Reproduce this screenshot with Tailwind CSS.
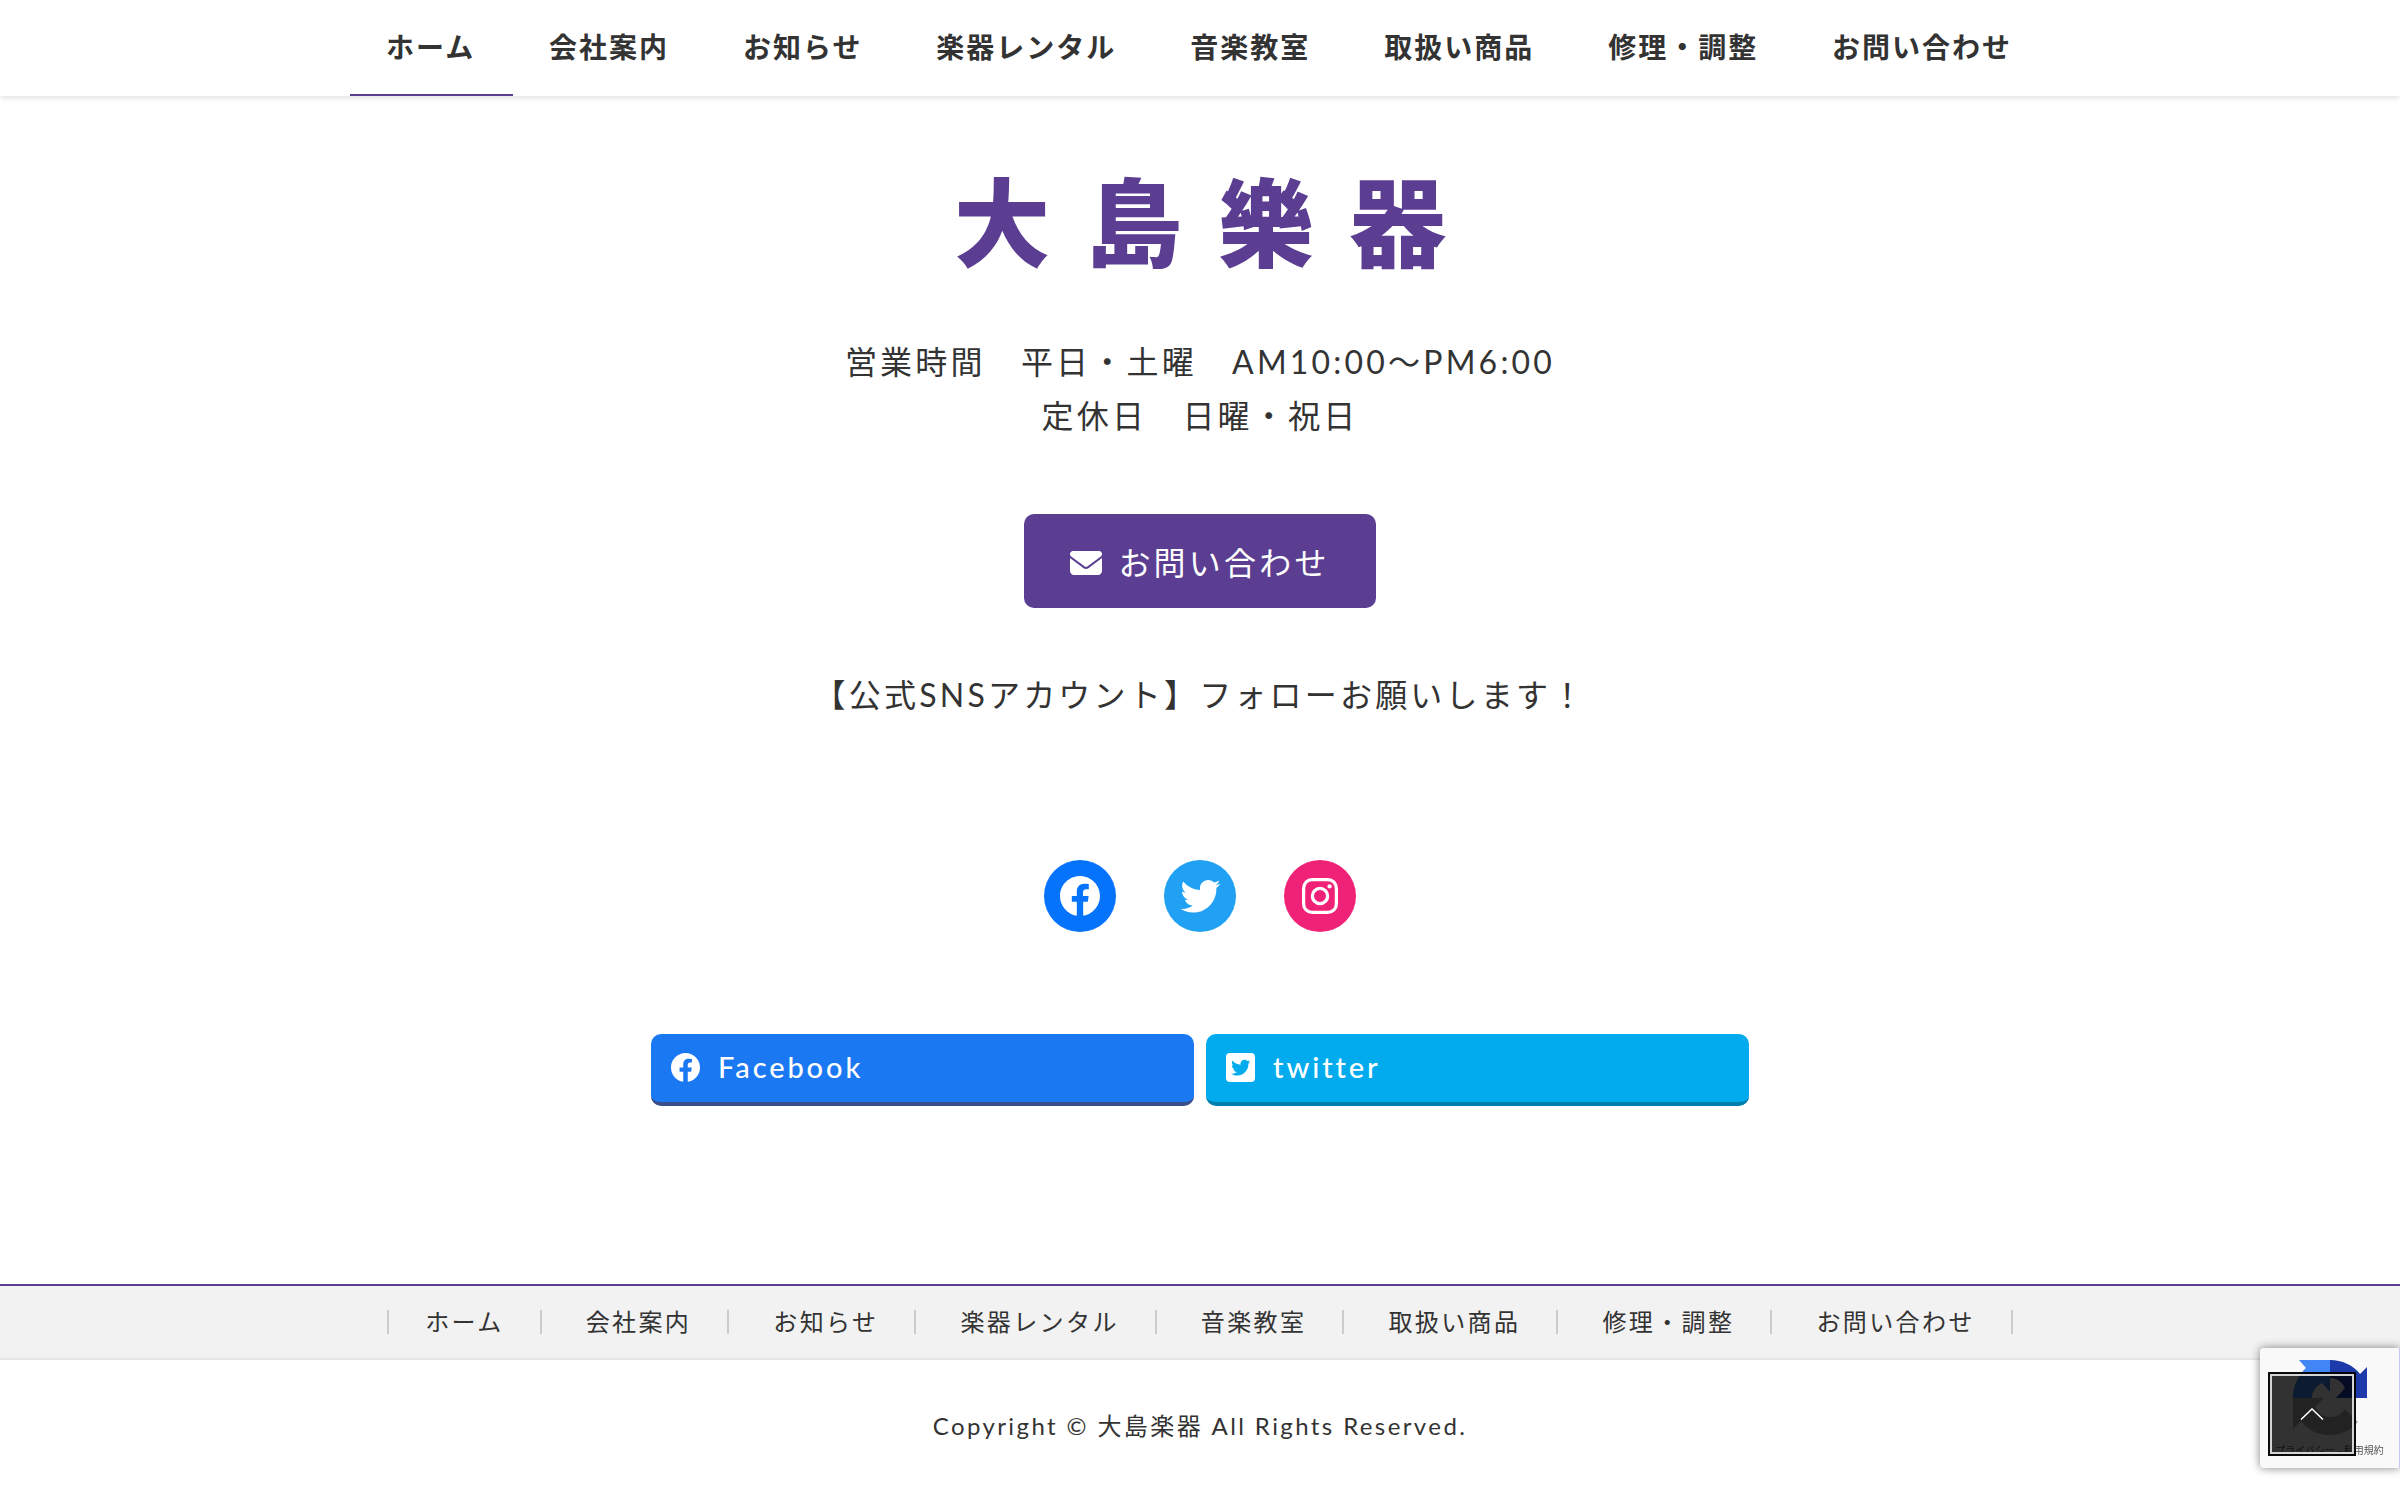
<!DOCTYPE html>
<html lang="ja">
<head>
    <meta charset="UTF-8">
    <meta name="viewport" content="width=device-width, initial-scale=1.0">
    <title>大島楽器</title>
    <script src="https://cdn.jsdelivr.net/npm/@tailwindcss/browser@4"></script>
</head>
<body class="min-h-screen bg-white font-['Lato','Noto_Sans_CJK_JP',sans-serif] text-[32px] leading-[54px] tracking-widest text-[#333]">
    <!-- Global navigation -->
    <header class="bg-white shadow-[0_2px_6px_rgba(0,0,0,0.12)]">
        <nav class="mx-auto flex h-24 max-w-[1700px] text-[28px] font-bold leading-[94px] tracking-[2px]">
            <a href="#" class="grow border-b-2 border-[#5b3e92] px-9 whitespace-nowrap">ホーム</a>
            <a href="#" class="grow border-b-2 border-transparent px-9 whitespace-nowrap">会社案内</a>
            <a href="#" class="grow border-b-2 border-transparent px-9 whitespace-nowrap">お知らせ</a>
            <a href="#" class="grow border-b-2 border-transparent px-9 whitespace-nowrap">楽器レンタル</a>
            <a href="#" class="grow border-b-2 border-transparent px-9 whitespace-nowrap">音楽教室</a>
            <a href="#" class="grow border-b-2 border-transparent px-9 whitespace-nowrap">取扱い商品</a>
            <a href="#" class="grow border-b-2 border-transparent px-9 whitespace-nowrap">修理・調整</a>
            <a href="#" class="grow border-b-2 border-transparent px-9 whitespace-nowrap">お問い合わせ</a>
        </nav>
    </header>

    <main class="flex flex-col items-center pt-[74px] pb-[178px]">
        <!-- Logo -->
        <h1 class="flex h-24 items-center gap-9 font-['Noto_Sans_CJK_JP',sans-serif] text-[96px] font-black leading-none tracking-normal text-[#5b3e92]">
            <span>大</span><span>島</span><span>樂</span><span>器</span>
        </h1>

        <p class="mt-[69px] text-center">
            営業時間　平日・土曜　AM10:00〜PM6:00<br>
            定休日　日曜・祝日
        </p>

        <a href="#" class="mt-[71px] flex h-[94px] items-center gap-4 rounded-[10px] bg-[#5b3e92] px-[46px] pt-1 text-white">
            <svg class="size-8" viewBox="0 0 512 512" fill="currentColor" aria-hidden="true">
                <path d="M48 64C21.500 64 0 85.500 0 112c0 15.100 7.100 29.300 19.200 38.400L236.800 313.600c11.400 8.500 27 8.500 38.400 0L492.800 150.400c12.100-9.100 19.200-23.300 19.200-38.400 0-26.500-21.500-48-48-48H48zM0 176V384c0 35.300 28.700 64 64 64H448c35.300 0 64-28.700 64-64V176L294.400 339.200c-22.800 17.100-54 17.100-76.800 0L0 176z"/>
            </svg>
            お問い合わせ
        </a>

        <p class="mt-[60px] text-center">【公式SNSアカウント】フォローお願いします！</p>

        <!-- Social icons -->
        <ul class="mt-[138px] flex gap-12">
            <li>
                <a href="#" aria-label="Facebook" class="flex size-[72px] items-center justify-center rounded-full bg-[#0573fb] text-white">
                    <svg class="size-12" viewBox="0 0 24 24" fill="currentColor" aria-hidden="true">
                        <path d="M12 2C6.500 2 2 6.500 2 12c0 5 3.700 9.100 8.400 9.900v-7H7.900V12h2.500V9.800c0-2.500 1.500-3.900 3.800-3.900 1.100 0 2.200.2 2.200.2v2.500h-1.300c-1.200 0-1.600.8-1.600 1.600V12h2.800l-.4 2.900h-2.300v7C18.300 21.100 22 17 22 12c0-5.500-4.500-10-10-10z"/>
                    </svg>
                </a>
            </li>
            <li>
                <a href="#" aria-label="Twitter" class="flex size-[72px] items-center justify-center rounded-full bg-[#21a1f3] text-white">
                    <svg class="size-12" viewBox="0 0 24 24" fill="currentColor" aria-hidden="true">
                        <path d="M22.230 5.924c-.736.326-1.527.547-2.357.646.847-.508 1.498-1.312 1.804-2.270-.793.470-1.671.812-2.606.996C18.324 4.498 17.257 4 16.077 4c-2.266 0-4.103 1.837-4.103 4.103 0 .322.036.635.106.935-3.410-.171-6.433-1.804-8.457-4.287-.353.606-.556 1.311-.556 2.063 0 1.424.724 2.680 1.825 3.415-.673-.021-1.305-.206-1.859-.513v.052c0 1.988 1.414 3.647 3.292 4.023-.344.095-.707.145-1.081.145-.264 0-.521-.026-.772-.074.522 1.630 2.038 2.817 3.833 2.850-1.404 1.100-3.174 1.757-5.096 1.757-.332 0-.659-.020-.979-.057 1.816 1.164 3.973 1.843 6.290 1.843 7.547 0 11.675-6.252 11.675-11.675 0-.178-.004-.355-.012-.531.802-.578 1.497-1.301 2.047-2.125z"/>
                    </svg>
                </a>
            </li>
            <li>
                <a href="#" aria-label="Instagram" class="flex size-[72px] items-center justify-center rounded-full bg-[#f02277] text-white">
                    <svg class="size-12" viewBox="0 0 24 24" fill="none" stroke="currentColor" stroke-width="1.620" aria-hidden="true">
                        <rect x="3.810" y="3.810" width="16.380" height="16.380" rx="4.200"/>
                        <circle cx="12" cy="12" r="3.810"/>
                        <circle cx="16.800" cy="7.200" r="1.080" fill="currentColor" stroke="none"/>
                    </svg>
                </a>
            </li>
        </ul>

        <!-- Share buttons -->
        <div class="mt-[102px] grid w-full max-w-[1098px] grid-cols-2 gap-3 text-[29px] leading-[66px] font-medium tracking-widest text-white">
            <a href="#" class="flex items-center gap-[18px] rounded-[10px] border-b-4 border-[#3a4f8a] bg-[#1b78f3] px-5 pb-[2px]">
                <svg class="size-[29px]" viewBox="0 0 512 512" fill="currentColor" aria-hidden="true">
                    <path d="M512 256C512 114.600 397.400 0 256 0S0 114.600 0 256c0 127.800 93.600 233.700 216 252.900V330h-65v-74h65v-56.400c0-64.200 38.200-99.600 96.700-99.600 28 0 57.300 5 57.300 5v63h-32.300c-31.800 0-41.700 19.800-41.700 40v48h71l-11.300 74H296v178.900C418.400 489.700 512 383.800 512 256z"/>
                </svg>
                Facebook
            </a>
            <a href="#" class="flex items-center gap-[18px] rounded-[10px] border-b-4 border-[#007fae] bg-[#02abed] px-5 pb-[2px]">
                <svg class="size-[29px]" viewBox="0 0 29 29" aria-hidden="true">
                    <rect width="29" height="29" rx="4" fill="#fff"/>
                    <path transform="translate(3 3) scale(0.960)" fill="#02abed" d="M22.230 5.924c-.736.326-1.527.547-2.357.646.847-.508 1.498-1.312 1.804-2.270-.793.470-1.671.812-2.606.996C18.324 4.498 17.257 4 16.077 4c-2.266 0-4.103 1.837-4.103 4.103 0 .322.036.635.106.935-3.410-.171-6.433-1.804-8.457-4.287-.353.606-.556 1.311-.556 2.063 0 1.424.724 2.680 1.825 3.415-.673-.021-1.305-.206-1.859-.513v.052c0 1.988 1.414 3.647 3.292 4.023-.344.095-.707.145-1.081.145-.264 0-.521-.026-.772-.074.522 1.630 2.038 2.817 3.833 2.850-1.404 1.100-3.174 1.757-5.096 1.757-.332 0-.659-.020-.979-.057 1.816 1.164 3.973 1.843 6.290 1.843 7.547 0 11.675-6.252 11.675-11.675 0-.178-.004-.355-.012-.531.802-.578 1.497-1.301 2.047-2.125z"/>
                </svg>
                twitter
            </a>
        </div>
    </main>

    <!-- Footer -->
    <footer class="text-[24px] leading-6 tracking-widest">
        <nav class="border-t-2 border-b-2 border-t-[#5b3e92] border-b-[#e5e5e5] bg-[#f2f2f2] py-6">
            <ul class="flex justify-center gap-2 whitespace-nowrap">
                <li class="border-x-2 border-[#ccc] px-9"><a href="#">ホーム</a></li>
                <li class="border-r-2 border-[#ccc] px-9"><a href="#">会社案内</a></li>
                <li class="border-r-2 border-[#ccc] px-9"><a href="#">お知らせ</a></li>
                <li class="border-r-2 border-[#ccc] px-9"><a href="#">楽器レンタル</a></li>
                <li class="border-r-2 border-[#ccc] px-9"><a href="#">音楽教室</a></li>
                <li class="border-r-2 border-[#ccc] px-9"><a href="#">取扱い商品</a></li>
                <li class="border-r-2 border-[#ccc] px-9"><a href="#">修理・調整</a></li>
                <li class="border-r-2 border-[#ccc] px-9"><a href="#">お問い合わせ</a></li>
            </ul>
        </nav>
        <p class="py-[54px] text-center">Copyright © 大島楽器 All Rights Reserved.</p>
    </footer>

    <!-- reCAPTCHA badge -->
    <div class="fixed right-0 bottom-7 flex h-[120px] w-[140px] flex-col items-center rounded-l-[4px] border-r border-[#c5c8f5] bg-[#f9f9f9] pt-3 shadow-[0_0_10px_#808080]">
        <svg class="h-[78px] w-[76px]" viewBox="0 0 76 78" aria-hidden="true">
            <path fill="#1c3aa9" d="M38 0c12 0 23 5 30 14l7-7v31H44l9-10c-3-6-8-10-15-10z"/>
            <path fill="#4285f4" d="M38 0v32l-8-9c-6 3-10 8-10 15H1c0-12 5-23 13-30L7 0z"/>
            <path fill="#ababab" d="M1 38h31l-9 9c3 6 8 10 15 10 7 0 12-3 15-8l13 13c-7 8-17 13-28 13-12 0-22-5-29-14l-8 8z"/>
        </svg>
        <span class="mt-1 text-[10px] leading-4 tracking-normal whitespace-nowrap text-[#555]">プライバシー - 利用規約</span>
    </div>

    <!-- Page top button -->
    <button type="button" aria-label="ページトップへ" class="fixed right-11 bottom-10 h-[84px] w-[88px] border-2 border-black/80 bg-black/80">
        <span class="flex size-full items-center justify-center border-2 border-[#d4d4d4]">
            <svg class="h-3 w-6" viewBox="0 0 24 12" fill="none" stroke="#fff" stroke-width="1.500" aria-hidden="true">
                <path d="M1 11.500 12 1l11 10.500"/>
            </svg>
        </span>
    </button>
</body>
</html>
